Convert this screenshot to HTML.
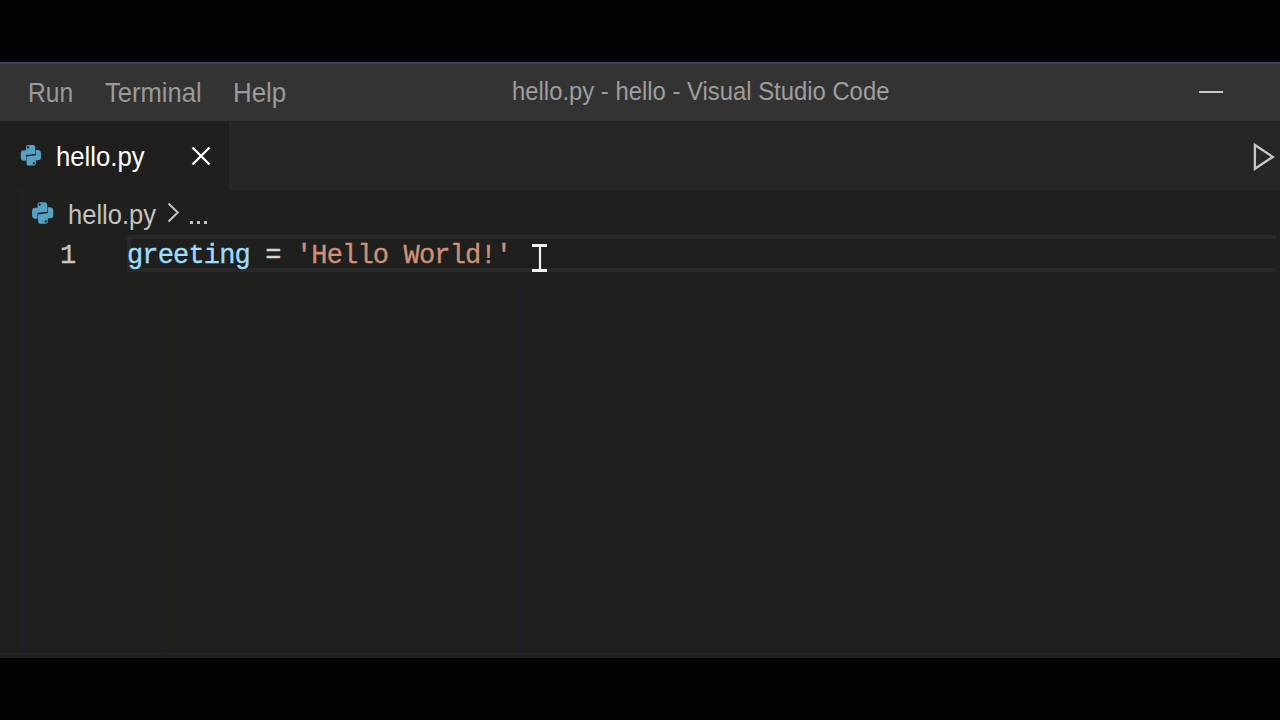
<!DOCTYPE html>
<html>
<head>
<meta charset="utf-8">
<style>
html,body{margin:0;padding:0;}
body{width:1280px;height:720px;background:#020104;position:relative;overflow:hidden;font-family:"Liberation Sans",sans-serif;}
.abs{position:absolute;}
#title{left:0;top:62px;width:1280px;height:59px;background:#343333;}
#titleline{left:0;top:62px;width:1280px;height:2px;background:#35425b;}
#titleshade{left:0;top:64px;width:1280px;height:3px;background:#373434;}
#tabs{left:0;top:121px;width:1280px;height:69px;background:#262624;}
#tab{left:0;top:121px;width:229px;height:69px;background:#1f1e1d;}
#editor{left:0;top:190px;width:1280px;height:468px;background:#1f1f1d;}
.t{position:absolute;white-space:nowrap;transform-origin:0 0;line-height:1;}
.menu{color:#9a9a9a;font-size:28px;}
.ttl{color:#9e9e9e;font-size:25px;}
.tabt{color:#ffffff;font-size:28px;}
.bc{color:#c3c3c3;font-size:28px;}
.code{font-family:"Liberation Mono",monospace;font-size:27px;letter-spacing:-0.84px;-webkit-text-stroke:0.35px currentColor;}
#curline{left:127px;top:235px;width:1149px;height:37px;box-sizing:border-box;border:4px solid #282828;border-right:none;}
</style>
</head>
<body>
<div id="title" class="abs"></div>
<div id="titleline" class="abs"></div>
<div id="titleshade" class="abs"></div>
<div class="t menu" style="left:27.5px;top:78.5px;transform:scaleX(0.878)">Run</div>
<div class="t menu" style="left:105px;top:79px;transform:scaleX(0.913)">Terminal</div>
<div class="t menu" style="left:232.5px;top:79px;transform:scaleX(0.925)">Help</div>
<div class="t ttl" style="left:512px;top:79px;transform:scaleX(0.954)">hello.py - hello - Visual Studio Code</div>
<div class="abs" style="left:1199px;top:91px;width:24px;height:2px;background:#c8c8c8;"></div>

<div id="tabs" class="abs"></div>
<div id="tab" class="abs"></div>
<svg class="abs" style="left:16px;top:141px;" width="30" height="29" viewBox="0 0 30 29"><g fill="#57a1c3"><path d="M10 9.3 V6.2 Q10 4 12.2 4 H17 Q19.3 4 19.3 6.2 V13 L10.6 14 Q10 14.1 10 14.7 V19.7 H7.8 Q4.8 19.7 4.8 16.2 V12.5 Q4.8 9.3 7.8 9.3 Z"/><path transform="rotate(180 14.9 14.3)" d="M10 9.3 V6.2 Q10 4 12.2 4 H17 Q19.3 4 19.3 6.2 V13 L10.6 14 Q10 14.1 10 14.7 V19.7 H7.8 Q4.8 19.7 4.8 16.2 V12.5 Q4.8 9.3 7.8 9.3 Z"/></g><circle cx="12" cy="6.3" r="1.1" fill="#1f1e1d"/><circle cx="17.8" cy="22.3" r="1.1" fill="#1f1e1d"/></svg>

<div class="t tabt" style="left:55.5px;top:142.5px;transform:scaleX(0.918)">hello.py</div>
<svg class="abs" style="left:190px;top:145px;" width="22" height="22" viewBox="0 0 22 22"><path d="M2.5 2.5 L19.5 19.5 M19.5 2.5 L2.5 19.5" stroke="#fff" stroke-width="2.3" fill="none"/></svg>
<svg class="abs" style="left:1250px;top:140px;" width="30" height="34" viewBox="0 0 30 34"><path d="M4.9 5 L22.8 16.9 L4.9 28.8 Z" stroke="#c8c8c8" stroke-width="2.3" fill="none" stroke-linejoin="miter"/></svg>

<div id="editor" class="abs"></div>
<svg class="abs" style="left:27px;top:198px;" width="31.5" height="30.5" viewBox="0 0 30 29"><g fill="#57a1c3"><path d="M10 9.3 V6.2 Q10 4 12.2 4 H17 Q19.3 4 19.3 6.2 V13 L10.6 14 Q10 14.1 10 14.7 V19.7 H7.8 Q4.8 19.7 4.8 16.2 V12.5 Q4.8 9.3 7.8 9.3 Z"/><path transform="rotate(180 14.9 14.3)" d="M10 9.3 V6.2 Q10 4 12.2 4 H17 Q19.3 4 19.3 6.2 V13 L10.6 14 Q10 14.1 10 14.7 V19.7 H7.8 Q4.8 19.7 4.8 16.2 V12.5 Q4.8 9.3 7.8 9.3 Z"/></g><circle cx="12" cy="6.3" r="1.1" fill="#1f1e1d"/><circle cx="17.8" cy="22.3" r="1.1" fill="#1f1e1d"/></svg>
<div class="t bc" style="left:67.5px;top:200.5px;transform:scaleX(0.9125)">hello.py</div>
<svg class="abs" style="left:165px;top:200px;" width="16" height="25" viewBox="0 0 16 25"><path d="M3.5 3.5 L12.8 12.5 L3.5 21.5" stroke="#c3c3c3" stroke-width="2" fill="none"/></svg>
<div class="abs" style="left:189.5px;top:220.5px;width:3px;height:3px;background:#c8c8c8;border-radius:0.5px;"></div>
<div class="abs" style="left:196.5px;top:220.5px;width:3px;height:3px;background:#c8c8c8;border-radius:0.5px;"></div>
<div class="abs" style="left:203.5px;top:220.5px;width:3px;height:3px;background:#c8c8c8;border-radius:0.5px;"></div>
<div class="abs" style="left:20px;top:190px;width:6px;height:465px;background:#201f24;"></div>
<div class="abs" style="left:160px;top:272px;width:6px;height:383px;background:#201f24;"></div>
<div class="abs" style="left:313px;top:272px;width:6px;height:383px;background:#211f1d;"></div>
<div class="abs" style="left:415px;top:272px;width:6px;height:383px;background:#211f1d;"></div>
<div class="abs" style="left:517px;top:272px;width:6px;height:383px;background:#201f24;"></div>
<div class="abs" style="left:0;top:653px;width:1245px;height:2px;background:#222126;"></div>
<div id="curline" class="abs"></div>
<div class="t code" style="left:60px;top:242.5px;color:#c6c6c6;">1</div>
<div class="t code" style="left:127px;top:242.5px;"><span style="color:#9cdcfe">greeting</span><span style="color:#d4d4d4"> = </span><span style="color:#ce9178">'Hello World!'</span></div>
<svg class="abs" style="left:530px;top:242px;" width="20" height="32" viewBox="0 0 20 32"><path d="M2 3.5 H17 M2 28.5 H17" stroke="#f0f0f0" stroke-width="3" fill="none"/><path d="M10 3.5 V28.5" stroke="#f0f0f0" stroke-width="2.2" fill="none"/></svg>
</body>
</html>
